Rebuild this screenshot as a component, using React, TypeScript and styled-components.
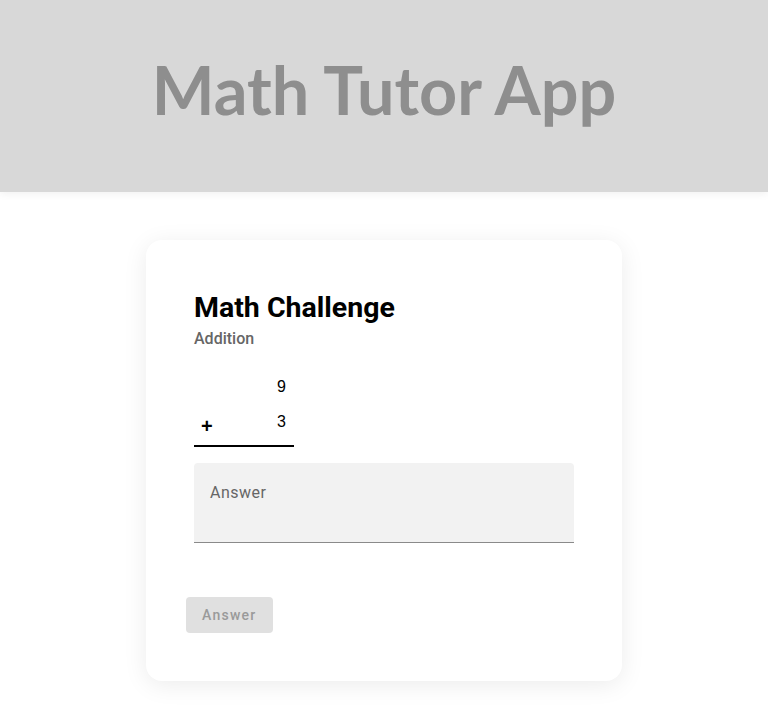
import React from "react";
import styled, { createGlobalStyle } from "styled-components";

const Global = createGlobalStyle`
  html, body { margin: 0; padding: 0; background: #ffffff; }
  body { font-family: Roboto, "Liberation Sans", sans-serif; }
  * { box-sizing: border-box; }
`;

const Page = styled.div`
  display: flex;
  flex-direction: column;
  align-items: center;
  min-height: 720px;
`;

const Header = styled.header`
  width: 100%;
  height: 192px;
  background: #d8d8d8;
  display: flex;
  align-items: center;
  justify-content: center;
  box-shadow: 0 2px 8px rgba(0, 0, 0, 0.06);
`;

const Title = styled.h1`
  margin: 0;
  font-family: Lato, sans-serif;
  font-weight: 700;
  font-size: 66.5px;
  color: #8e8e8e;
  line-height: 1;
  padding-bottom: 14px;
`;

const Card = styled.section`
  margin-top: 48px;
  width: 476px;
  background: #ffffff;
  border-radius: 16px;
  box-shadow: 0 4px 24px rgba(0, 0, 0, 0.08);
  padding: 50px 48px 48px;
  display: flex;
  flex-direction: column;
`;

const CardTitle = styled.h2`
  margin: 0;
  font-family: Roboto, sans-serif;
  font-weight: 700;
  font-size: 28.5px;
  line-height: 36px;
  color: #000;
`;

const Subtitle = styled.div`
  margin-top: 3px;
  font-family: Roboto, sans-serif;
  font-weight: 500;
  font-size: 16px;
  color: #666;
`;

const Problem = styled.div`
  margin-top: 30px;
  width: 100px;
  border-bottom: 2px solid #000;
  display: grid;
  grid-template-columns: 1fr auto;
  row-gap: 17px;
  padding-bottom: 12px;
  font-family: "Liberation Sans", Arial, sans-serif;
  font-size: 16px;
  color: #000;
`;

const Operator = styled.span`
  font-weight: 700;
  font-size: 20px;
  padding-left: 7px;
  align-self: end;
  line-height: 1;
  transform: translateY(3px);
`;

const Digit = styled.span`
  grid-column: 2;
  padding-right: 8px;
  line-height: 18px;
`;

const Field = styled.div`
  margin-top: 16px;
  height: 80px;
  background: #f2f2f2;
  border-radius: 4px 4px 0 0;
  border-bottom: 1px solid #8a8a8a;
  padding: 20px 16px;
`;

const FieldLabel = styled.label`
  font-family: Roboto, sans-serif;
  font-size: 16px;
  letter-spacing: 0.5px;
  color: #666;
`;

const Button = styled.button`
  margin-top: 54px;
  margin-left: -8px;
  align-self: flex-start;
  height: 36px;
  padding: 0 16px;
  border: none;
  border-radius: 4px;
  background: #e0e0e0;
  color: #9a9a9a;
  font-family: Roboto, sans-serif;
  font-weight: 500;
  font-size: 14px;
  letter-spacing: 1.25px;
`;

export default function App() {
  return (
    <Page>
      <Global />
      <Header>
        <Title>Math Tutor App</Title>
      </Header>
      <Card>
        <CardTitle>Math Challenge</CardTitle>
        <Subtitle>Addition</Subtitle>
        <Problem>
          <Digit>9</Digit>
          <Operator>+</Operator>
          <Digit>3</Digit>
        </Problem>
        <Field>
          <FieldLabel>Answer</FieldLabel>
        </Field>
        <Button disabled>Answer</Button>
      </Card>
    </Page>
  );
}
